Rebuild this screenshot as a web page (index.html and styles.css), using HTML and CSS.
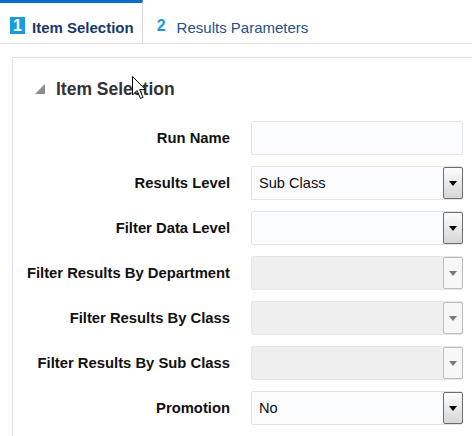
FILE: index.html
```html
<!DOCTYPE html>
<html>
<head>
  <title>Item Selection</title>
  <link rel="stylesheet" href="styles.css">
</head>
<body>

  <div class="tabs">
    <div class="tab active">
      <span class="badge">1</span>
      <span class="tab-label">Item Selection</span>
    </div>
    <div class="tab">
      <span class="step">2</span>
      <span class="tab-label">Results Parameters</span>
    </div>
  </div>

  <div class="panel">
    <div class="panel-head">
      <span class="disclosure"></span>
      <h2>Item Selection</h2>
    </div>

    <div class="form">
      <label>Run Name</label>
      <div class="field"></div>

      <label>Results Level</label>
      <div class="field select"><span class="value">Sub Class</span><span class="drop"></span></div>

      <label>Filter Data Level</label>
      <div class="field select"><span class="value"></span><span class="drop"></span></div>

      <label>Filter Results By Department</label>
      <div class="field select disabled"><span class="value"></span><span class="drop"></span></div>

      <label>Filter Results By Class</label>
      <div class="field select disabled"><span class="value"></span><span class="drop"></span></div>

      <label>Filter Results By Sub Class</label>
      <div class="field select disabled"><span class="value"></span><span class="drop"></span></div>

      <label>Promotion</label>
      <div class="field select"><span class="value">No</span><span class="drop"></span></div>
    </div>
  </div>

  <svg class="cursor" width="14" height="24" viewBox="0 0 14 24">
    <path d="M0.5 0.5 L0.5 19 L5 14.5 L8.5 22.5 L11 21.3 L7.6 13.6 L13.5 13.6 Z" fill="#fff" stroke="#000" stroke-width="1"/>
  </svg>

</body>
</html>
```

FILE: styles.css
```css
body {
  margin: 0;
  font-family: "Liberation Sans", Arial, sans-serif;
  background: #fff;
  position: relative;
}

/* tab strip */
.tabs {
  display: flex;
  height: 43px;
  border-bottom: 1px solid #d9dfe5;
}

.tab {
  display: flex;
  align-items: center;
  box-sizing: border-box;
  height: 43px;
  padding: 9px 10px 0 14px;
  border-top: 3px solid transparent;
  font-size: 15px;
  white-space: nowrap;
  color: #26508a;
}

.tab.active {
  padding-left: 10px;
  padding-right: 8px;
  border-top-color: #0b6ccb;
  border-right: 1px solid #d3d9df;
  color: #1a3768;
  font-weight: bold;
}

.badge {
  width: 15px;
  height: 17px;
  margin: 0 7px 5px 0;
  background: #1a9be0;
  color: #fff;
  font-weight: bold;
  font-size: 16px;
  line-height: 17px;
  text-align: center;
}

.step {
  margin: 0 11px 4px 0;
  color: #1e9ada;
  font-size: 16px;
  font-weight: bold;
}

/* form panel */
.panel {
  margin: 13px 0 0 12px;
  border-top: 1px solid #dbe1e7;
  border-left: 1px solid #dbe1e7;
  padding: 21px 0 20px 0;
}

.panel-head {
  display: flex;
  align-items: center;
  height: 20px;
  padding-left: 22px;
}

.disclosure {
  width: 0;
  height: 0;
  margin-right: 11px;
  border-left: 10px solid transparent;
  border-bottom: 10px solid #8c8c8c;
}

h2 {
  margin: 0;
  font-size: 17.5px;
  color: #333;
}

.form {
  display: grid;
  grid-template-columns: 217px 212px;
  column-gap: 21px;
  row-gap: 11px;
  align-items: center;
  margin-top: 22px;
}

label {
  text-align: right;
  font-weight: bold;
  font-size: 14.8px;
  color: #111;
}

.field {
  display: flex;
  align-items: center;
  box-sizing: border-box;
  height: 34px;
  border: 1px solid #e0e4e9;
  border-radius: 2px;
  background: #fbfcfd;
  font-size: 14.6px;
  color: #0a0a14;
}

.value {
  flex: 1;
  padding-left: 7px;
}

.drop {
  position: relative;
  box-sizing: border-box;
  width: 20px;
  height: 32px;
  margin-right: -1px;
  border: 1px solid #6e6e6e;
  border-radius: 2px;
  background: linear-gradient(#fdfdfd, #d6d6d6);
}

.drop::after {
  content: "";
  position: absolute;
  left: 5px;
  top: 13px;
  border-left: 4px solid transparent;
  border-right: 4px solid transparent;
  border-top: 5px solid #000;
}

.field.disabled {
  background: #efefef;
  border-color: #e6e6e6;
}

.disabled .drop {
  border-color: #bcbcbc;
  background: #f7f7f7;
}

.disabled .drop::after {
  border-top-color: #7a7a7a;
}

/* pointer hovering over the heading */
.cursor {
  position: absolute;
  left: 132px;
  top: 76px;
}
```
